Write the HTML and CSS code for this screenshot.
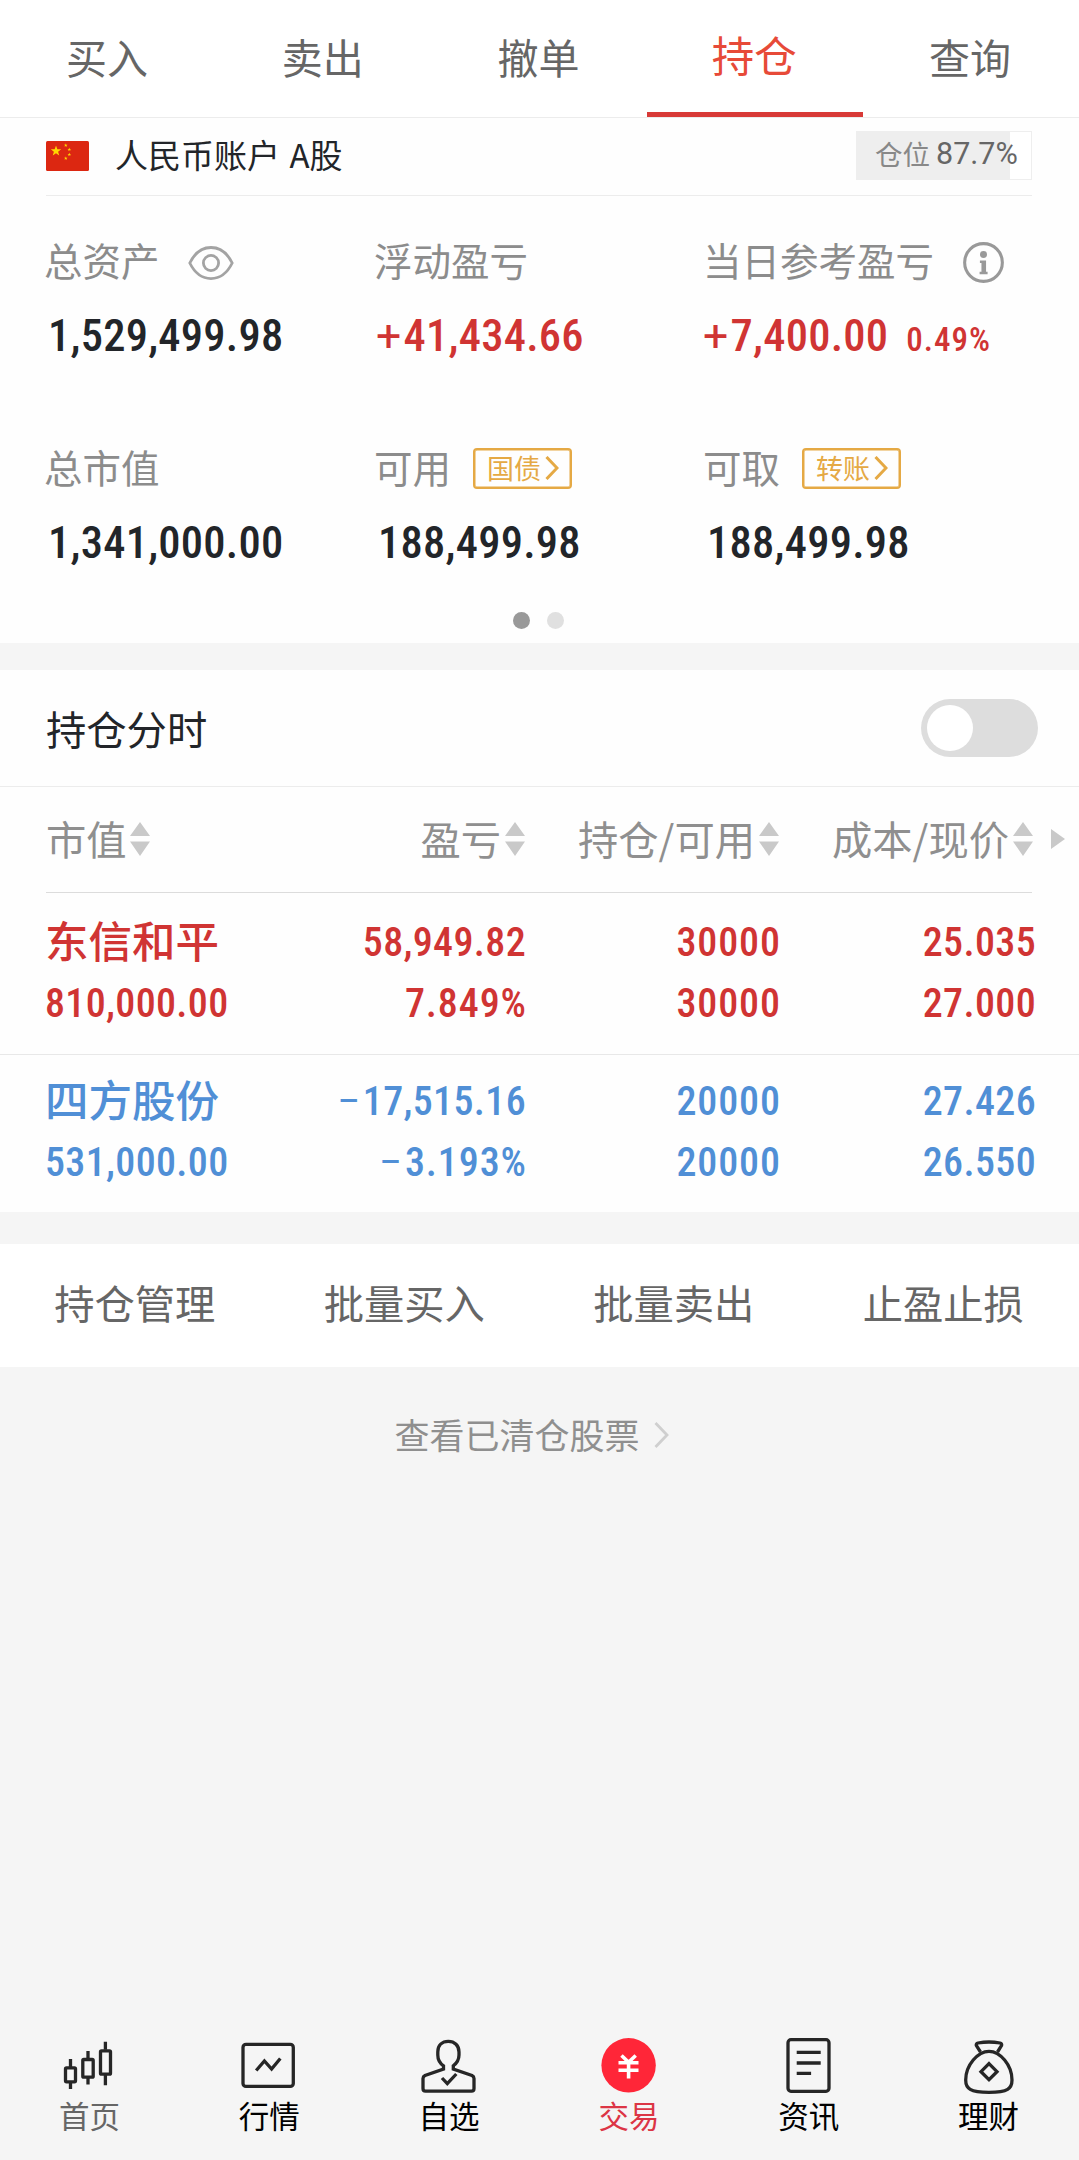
FILE: index.html
```html
<!DOCTYPE html>
<html lang="zh-CN">
<head>
<meta charset="utf-8">
<title>持仓</title>
<link rel="stylesheet" href="styles.css">
</head>
<body>
<svg class="defs" width="0" height="0">
  <symbol id="sort" viewBox="0 0 20 34"><path d="M10 0L20 14H0ZM10 34L20 19.500H0Z" fill="#c9c9c9"/></symbol>
  <symbol id="star" viewBox="-10 -10 20 20"><path d="M0-10L2.400-3.100 9.500-3.100 3.800 1.200 5.900 8.100 0 4 -5.900 8.100 -3.800 1.200 -9.500-3.100 -2.400-3.100Z" fill="#ffd800"/></symbol>
</svg>
<div class="screen">
  <nav class="tabs">
    <a class="tab">买入</a><a class="tab">卖出</a><a class="tab">撤单</a><a class="tab tab-active">持仓</a><a class="tab">查询</a>
  </nav>

  <section class="summary">
    <header class="account">
      <svg class="flag" width="43" height="30" viewBox="0 0 43 30">
        <rect width="43" height="30" rx="1.500" fill="#dc2711"/>
        <use href="#star" x="4.500" y="4.500" width="11" height="11"/>
        <use href="#star" x="17.800" y="2.300" width="4" height="4"/>
        <use href="#star" x="21.300" y="6.500" width="4" height="4"/>
        <use href="#star" x="21.300" y="11.500" width="4" height="4"/>
        <use href="#star" x="17.800" y="15.300" width="4" height="4"/>
      </svg>
      <span class="account-name">人民币账户 A股</span>
      <span class="ratio">仓位<b>87.7%</b></span>
    </header>
    <div class="metrics">
      <div class="metric">
        <div class="label">总资产
          <svg class="eye" width="46" height="34" viewBox="0 0 46 34" fill="none" stroke="#a3a3a3" stroke-width="2.800"><path d="M1.800 17C12-3.700 34-3.700 44.200 17C34 37.700 12 37.700 1.800 17Z"/><circle cx="23" cy="17" r="7.600"/></svg>
        </div>
        <div class="value lead"><span class="num">1,529,499.98</span></div>
      </div>
      <div class="metric">
        <div class="label">浮动盈亏</div>
        <div class="value up total-gain"><span class="num"><span class="sign">+</span>41,434.66</span></div>
      </div>
      <div class="metric">
        <div class="label">当日参考盈亏
          <svg class="info" width="41" height="41" viewBox="0 0 40 40"><circle cx="20" cy="20" r="18.400" fill="none" stroke="#999" stroke-width="3"/><circle cx="20" cy="12.200" r="3.400" fill="#999"/><path d="M16.500 18h6v11h1.500v2.500h-7.800v-2.500h1.800v-8.500h-1.500z" fill="#999"/></svg>
        </div>
        <div class="value up"><span class="num"><span class="sign">+</span>7,400.00</span><span class="num pct">0.49%</span></div>
      </div>
      <div class="metric">
        <div class="label">总市值</div>
        <div class="value lead"><span class="num">1,341,000.00</span></div>
      </div>
      <div class="metric">
        <div class="label">可用<a class="chip">国债<svg width="14" height="24" viewBox="0 0 14 24"><path d="M1.500 1L12 12L1.500 23"/></svg></a></div>
        <div class="value lead"><span class="num">188,499.98</span></div>
      </div>
      <div class="metric">
        <div class="label">可取<a class="chip">转账<svg width="14" height="24" viewBox="0 0 14 24"><path d="M1.500 1L12 12L1.500 23"/></svg></a></div>
        <div class="value lead"><span class="num">188,499.98</span></div>
      </div>
    </div>
    <div class="dots"><i class="dot dot-on"></i><i class="dot"></i></div>
  </section>

  <section class="holdings">
    <div class="switch-row"><span>持仓分时</span><span class="switch"><i></i></span></div>
    <div class="row head">
      <span>市值<svg class="sort"><use href="#sort"/></svg></span>
      <span>盈亏<svg class="sort"><use href="#sort"/></svg></span>
      <span>持仓/可用<svg class="sort"><use href="#sort"/></svg></span>
      <span>成本/现价<svg class="sort"><use href="#sort"/></svg></span>
      <svg class="more" width="14" height="20" viewBox="0 0 14 20"><path d="M0 0L14 10L0 20Z" fill="#c9c9c9"/></svg>
    </div>
    <div class="rule"></div>
    <div class="row stock up">
      <div class="cell"><strong>东信和平</strong><span class="num">810,000.00</span></div>
      <div class="cell"><span class="num">58,949.82</span><span class="num rate">7.849%</span></div>
      <div class="cell shares"><span class="num">30000</span><span class="num">30000</span></div>
      <div class="cell"><span class="num">25.035</span><span class="num">27.000</span></div>
    </div>
    <div class="row stock down">
      <div class="cell"><strong>四方股份</strong><span class="num">531,000.00</span></div>
      <div class="cell"><span class="num"><span class="sign">−</span>17,515.16</span><span class="num rate"><span class="sign">−</span>3.193%</span></div>
      <div class="cell shares"><span class="num">20000</span><span class="num">20000</span></div>
      <div class="cell"><span class="num">27.426</span><span class="num">26.550</span></div>
    </div>
  </section>

  <nav class="actions"><a>持仓管理</a><a>批量买入</a><a>批量卖出</a><a>止盈止损</a></nav>

  <a class="cleared">查看已清仓股票<svg width="16" height="26" viewBox="0 0 16 26"><path d="M1.500 1L13 13L1.500 25" fill="none" stroke="#cfcfcf" stroke-width="2.800"/></svg></a>

  <nav class="bottom">
    <a class="item muted"><svg class="icon" viewBox="0 0 60 60"><g><rect x="6.500" y="32.800" width="10" height="14" rx="1"/><path d="M11.500 24v8M11.500 47v7M29 16v8M29 43v6.500M46.400 6.700v8M46.400 40v10.300"/><rect x="23.800" y="24.500" width="10.400" height="17.700" rx="1"/><rect x="41.500" y="15.800" width="10" height="23.400" rx="1"/></g></svg>首页</a>
    <a class="item"><svg class="icon" viewBox="0 0 60 60"><rect x="4" y="9.400" width="50.300" height="42" rx="3"/><path d="M17.200 35.500L25.400 26L32.600 34L41.300 23.500"/></svg>行情</a>
    <a class="item"><svg class="icon" viewBox="0 0 60 60"><path d="M24.500 34v-3.200C20.500 28 18.800 24.500 18.800 20v-3C18.800 10.500 23 6.400 29.300 6.400S40 10.500 40 17v3C40 24.500 38 28 34.300 30.800V34L53 40.500Q55 41.500 55 43.500V53.500Q55 56.200 52.500 56.200H6.500Q4 56.200 4 53.500V43.500Q4 41.500 6 40.500Z"/><path d="M23 43L28.300 48.700L37.300 39"/></svg>自选</a>
    <a class="item active"><svg class="icon" viewBox="0 0 60 60"><circle cx="29.600" cy="30.300" r="27.200" fill="#ff2638" stroke="none"/><path d="M22.500 20.500L29.600 27.200L36.700 20.500M19.500 27.800h20M19.500 35.200h20M29.600 27v16.500" stroke="#fff" stroke-width="3.600"/></svg>交易</a>
    <a class="item"><svg class="icon" viewBox="0 0 60 60"><rect x="9" y="4.700" width="41" height="51.600" rx="3"/><path d="M17.700 17.300h24M17.700 28h24M17.700 38.300h14.400"/></svg>资讯</a>
    <a class="item"><svg class="icon" viewBox="0 0 60 60"><path d="M21.500 17L17.300 10.500Q17 8.500 19 8Q30 6 41 8Q43 8.500 42.600 10.500L38.500 17"/><path d="M30 16.300C41 16.300 53 30 53 45C53 53.500 49 57.300 30 57.300S6.700 53.500 6.700 45C6.700 30 19 16.300 30 16.300Z"/><path d="M30 28.700L38 36.700L30 44.700L22 36.700Z"/></svg>理财</a>
  </nav>
</div>
</body>
</html>
```
FILE: styles.css
```css
* { box-sizing: border-box; }
body { margin: 0; background: #f5f5f5; font-family: "Noto Sans CJK SC", sans-serif; color: #222529; }
.defs { position: absolute; }
.screen { width: 1079px; height: 2160px; display: flex; flex-direction: column; }
svg { flex: none; display: block; }

.tabs { display: flex; height: 118px; background: #fff; border-bottom: 1px solid #ececec; }
.tab { flex: none; width: 20%; height: 117px; padding-right: 2px; text-align: center; font-size: 41px; line-height: 112px; color: #666; }
.tab-active { font-size: 42.500px; line-height: 108px; color: #e74a38; border-bottom: 5px solid #d83a37; }

.summary { height: 525px; background: #fefefe; }
.account { display: flex; align-items: center; height: 78px; margin: 0 47px 0 46px; border-bottom: 1px solid #ececec; }
.flag { margin-bottom: 2px; }
.account-name { margin-left: 26px; font-size: 33px; line-height: 70px; padding-bottom: 5px; word-spacing: 2px; }
.ratio { margin: 0 0 2px auto; width: 176px; height: 49px; padding-left: 18px; display: flex; align-items: center; gap: 6px; border: 1px solid #eee; font-size: 27.500px; line-height: 41px; padding-bottom: 4px; color: #888; background: linear-gradient(90deg, #eee 153px, #fff 153px); }
.ratio b { font: 400 30.500px/46px Roboto, sans-serif; color: #666; padding-top: 1px; }

.metrics { display: grid; grid-template-columns: 330px 329px 1fr; grid-auto-rows: 207px; padding: 38px 0 0 44px; height: 414px; }
.label { display: flex; align-items: center; height: 54px; font-size: 38.500px; line-height: 50px; padding-bottom: 4px; color: #8c8c8c; white-space: nowrap; }
.eye { margin: 8px 0 0 28px; }
.info { margin: 7px 0 0 29px; }
.value { display: flex; align-items: baseline; height: 60px; margin-top: 18px; font-size: 44.500px; line-height: 60px; letter-spacing: .250px; }
.lead { padding-left: 4px; }
.total-gain { padding-left: 2px; }
.num { font-family: Roboto, sans-serif; font-weight: 500; font-stretch: 75%; white-space: nowrap; }
.sign { display: inline-block; margin-right: 2px; font-stretch: 100%; font-weight: 400; }
.pct { font-size: 33px; letter-spacing: 1px; margin-left: 18px; }
.up { color: #d03433; }
.down { color: #508fd6; }
.chip { display: flex; align-items: center; gap: 4px; width: 99px; height: 41px; margin: 4px 0 0 22px; padding: 0 0 1px 12px; border: 2.500px solid #e5a944; border-radius: 4px; font-size: 27px; line-height: 30px; color: #e5a944; box-shadow: inset 0 0 0 .500px #e5a944; }
.chip svg { fill: none; stroke: #e5a944; stroke-width: 3; }
.dots { display: flex; justify-content: center; gap: 17px; padding: 2px 2px 0 0; }
.dot { width: 17px; height: 17px; border-radius: 50%; background: #e0e0e0; }
.dot-on { background: #999; }

.holdings { margin-top: 27px; height: 542px; background: #fefefe; }
.switch-row { display: flex; align-items: center; justify-content: space-between; height: 117px; padding: 0 41px 0 46px; border-bottom: 1px solid #ececec; font-size: 40.300px; line-height: 112px; }
.switch { width: 117px; height: 58px; padding: 6px; border-radius: 29px; background: #ddd; }
.switch i { display: block; width: 46px; height: 46px; border-radius: 50%; background: #fff; }
.row { display: grid; grid-template-columns: 240px 241px 254px 256px; padding-left: 45px; }
.head { height: 105px; grid-template-columns: 239px 240px 254px 254px 46px; padding: 0 0 4px 46px; font-size: 40.300px; line-height: 52px; color: #8f8f8f; align-items: center; }
.head span { display: flex; align-items: center; justify-content: flex-end; gap: 4px; }
.head span:first-child { justify-content: flex-start; gap: 3px; }
.sort { width: 20px; height: 34px; margin-top: 3px; }
.more { margin: 3px 0 0 18px; }
.rule { height: 1px; margin: 0 47px 0 46px; background: #dcdcdc; }
.stock { height: 162px; padding-top: 19px; border-bottom: 1px solid #e8e8e8; }
.stock + .stock { height: 157px; padding-top: 16px; border-bottom: 0; }
.cell { display: flex; flex-direction: column; align-items: flex-end; font-size: 40px; line-height: 61px; }
.cell .num { letter-spacing: .350px; }
.cell:first-child { align-items: flex-start; }
.cell strong { font-size: 43.500px; font-weight: 500; height: 61px; line-height: 55px; }
.shares .num, .cell .rate { letter-spacing: .900px; margin-right: -.900px; }

.actions { display: grid; grid-template-columns: repeat(4, 1fr); height: 123px; margin-top: 32px; padding-right: 1px; background: #fff; text-align: center; font-size: 40.300px; line-height: 115px; color: #666; }
.cleared { display: flex; align-items: center; justify-content: center; gap: 14px; height: 134px; font-size: 35px; line-height: 130px; color: #8f8f8f; padding-right: 15px; }
.cleared svg { margin-top: 2px; }
.bottom { display: grid; grid-template-columns: repeat(6, 1fr); height: 125px; margin-top: auto; }
.item { display: flex; flex-direction: column; align-items: center; padding-right: 1px; font-size: 30.500px; line-height: 41px; color: #000; }
.icon { width: 60px; height: 60px; fill: none; stroke: #262626; stroke-width: 3.300; }
.muted { color: #666; }
.active { color: #dc3545; }
```
